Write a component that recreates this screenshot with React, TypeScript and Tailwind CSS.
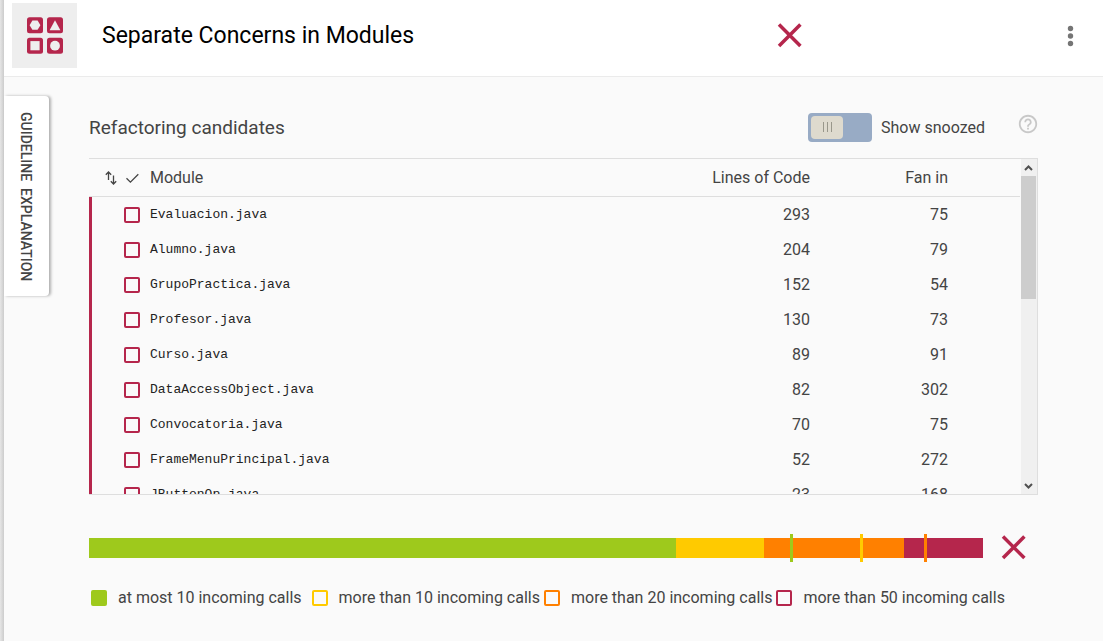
import { useState } from "react";
import { MdHelpOutline } from "react-icons/md";

type ModuleRow = { name: string; loc: number; fanIn: number };

const rows: ModuleRow[] = [
  { name: "Evaluacion.java", loc: 293, fanIn: 75 },
  { name: "Alumno.java", loc: 204, fanIn: 79 },
  { name: "GrupoPractica.java", loc: 152, fanIn: 54 },
  { name: "Profesor.java", loc: 130, fanIn: 73 },
  { name: "Curso.java", loc: 89, fanIn: 91 },
  { name: "DataAccessObject.java", loc: 82, fanIn: 302 },
  { name: "Convocatoria.java", loc: 70, fanIn: 75 },
  { name: "FrameMenuPrincipal.java", loc: 52, fanIn: 272 },
  { name: "JButtonOp.java", loc: 23, fanIn: 168 },
];

const segments = [
  { size: 587, color: "bg-[#9ec91c]" },
  { size: 88, color: "bg-[#ffca00]" },
  { size: 140, color: "bg-[#ff8000]" },
  { size: 79, color: "bg-[#b5264c]" },
];

const markers = [
  { at: 78.4, color: "bg-[#9ec91c]" },
  { at: 86.25, color: "bg-[#ffca00]" },
  { at: 93.4, color: "bg-[#ff8000]" },
];

const legend = [
  { label: "at most 10 incoming calls", box: "border-[#9ec91c] checked:bg-[#9ec91c]", item: "mr-[6px]" },
  { label: "more than 10 incoming calls", box: "border-[#ffca00] checked:bg-[#ffca00]", item: "" },
  { label: "more than 20 incoming calls", box: "border-[#ff8000] checked:bg-[#ff8000]", item: "" },
  { label: "more than 50 incoming calls", box: "border-[#b5264c] checked:bg-[#b5264c]", item: "" },
];

function Cross() {
  return (
    <svg viewBox="0 0 26 26" className="size-[26px] shrink-0" role="img" aria-label="Not met">
      <path d="M2 1.6 23.4 23M23.4 1.6 2 23" stroke="#b5264c" strokeWidth="3.5" fill="none" />
    </svg>
  );
}

function Logo() {
  return (
    <svg viewBox="0 0 37 37" className="size-[37px]" aria-hidden="true">
      <g fill="#b5264c">
        <rect x="1" y="0.3" width="16" height="16" rx="2.5" />
        <rect x="21" y="0.3" width="16" height="16" rx="2.5" />
        <rect x="1" y="20.7" width="16" height="16" rx="2.5" />
        <rect x="21" y="20.7" width="16" height="16" rx="2.5" />
      </g>
      <g fill="#eeeeee">
        <path d="M6.4 3.6h5.2L14.4 8.2l-2.8 4.6H6.4L3.6 8.2z" />
        <path d="M29 3.2 34.4 13.2H23.6z" />
        <rect x="4.4" y="24.1" width="9.2" height="9.2" />
        <circle cx="29" cy="28.7" r="4.9" />
      </g>
    </svg>
  );
}

function Chevron({ down = false }: { down?: boolean }) {
  return (
    <svg viewBox="0 0 15 17" className="h-[17px] w-[15px]" aria-hidden="true">
      <path d={down ? "M4 7l3.5 3.5L11 7" : "M4 11l3.5-3.5L11 11"} fill="none" stroke="#505050" strokeWidth="2" />
    </svg>
  );
}

function CandidatesTable() {
  return (
    <div className="flex h-[337px] border-y border-r border-[#dedede]">
      <div className="min-w-0 flex-1 overflow-hidden">
        <table className="w-full table-fixed border-separate border-spacing-0 text-base text-[#444]">
          <thead>
            <tr className="h-[38px]">
              <th className="w-[61px] border-b border-[#dedede] p-0 text-left font-normal">
                <span className="flex items-center gap-2 pl-4">
                  <svg viewBox="0 0 12 14" className="h-[14px] w-[12px]" role="img" aria-label="Sort">
                    <path d="M3.5 9V1.2M.8 3.7 3.5 1l2.7 2.7M8.5 4.5V13M5.8 10.3l2.7 2.7 2.7-2.7" fill="none" stroke="#444" strokeWidth="1.3" />
                  </svg>
                  <svg viewBox="0 0 14 14" className="size-[14px]" role="img" aria-label="Selected">
                    <path d="m1.5 7.2 3.9 3.9 7.9-7.9" fill="none" stroke="#444" strokeWidth="1.3" />
                  </svg>
                </span>
              </th>
              <th className="border-b border-[#dedede] p-0 text-left font-normal">Module</th>
              <th className="w-[160px] border-b border-[#dedede] p-0 text-right font-normal">Lines of Code</th>
              <th className="w-[210px] border-b border-[#dedede] p-0 pr-[72px] text-right font-normal">Fan in</th>
            </tr>
          </thead>
          <tbody>
            {rows.map((row) => (
              <tr key={row.name} className="h-[35px]">
                <td className="border-l-[3px] border-[#b5264c] p-0 pl-8">
                  <input
                    type="checkbox"
                    aria-label={"Select " + row.name}
                    className="block size-4 appearance-none rounded-xs border-2 border-[#b5264c] checked:bg-[#b5264c]"
                  />
                </td>
                <td className="p-0 font-['Liberation_Mono',monospace] text-[13px] text-[#222]">{row.name}</td>
                <td className="p-0 text-right">{row.loc}</td>
                <td className="p-0 pr-[72px] text-right">{row.fanIn}</td>
              </tr>
            ))}
          </tbody>
        </table>
      </div>
      <div className="ml-px flex w-[16px] flex-col bg-[#f0f0f0]" aria-hidden="true">
        <Chevron />
        <div className="h-[123px] w-[15px] bg-[#cdcdcd]" />
        <div className="flex-1" />
        <Chevron down />
      </div>
    </div>
  );
}

function ProfileBar() {
  return (
    <div className="flex items-center pr-[11px]">
      <div className="relative flex h-5 flex-1">
        {segments.map((s) => (
          <div key={s.color} className={s.color} style={{ flexGrow: s.size, flexBasis: 0 }} />
        ))}
        {markers.map((m) => (
          <div key={m.color} className={"absolute -top-1 h-7 w-[3px] " + m.color} style={{ left: m.at + "%" }} />
        ))}
      </div>
      <div className="ml-[18px] flex">
        <Cross />
      </div>
    </div>
  );
}

export default function App() {
  const [snoozed, setSnoozed] = useState(false);

  return (
    <div className="flex min-h-screen bg-[#fafafa] font-[Roboto,sans-serif] text-[#444]">
      <div className="w-1 shrink-0 bg-linear-to-r from-[#e6e6e6] to-[#cccccc]" />
      <div className="min-w-0 flex-1">
        <header className="flex h-[77px] items-start border-b border-[#ebebeb] bg-white pl-2">
          <div className="mt-[3px] flex size-[65px] items-center justify-center bg-[#eeeeee]">
            <Logo />
          </div>
          <div className="flex h-[71px] flex-1 items-center pl-[25px]">
            <h1 className="flex-1 text-[23px] leading-8 text-black">Separate Concerns in Modules</h1>
            <Cross />
            <button type="button" aria-label="More options" className="ml-[256px] mr-5 p-0">
              <svg viewBox="0 0 24 24" className="size-6" fill="#757575" aria-hidden="true">
                <circle cx="11.5" cy="4.5" r="2.7" />
                <circle cx="11.5" cy="12" r="2.7" />
                <circle cx="11.5" cy="19.5" r="2.7" />
              </svg>
            </button>
          </div>
        </header>

        <div className="flex items-start pt-[19px]">
          <button
            type="button"
            className="flex h-[200px] w-[45px] shrink-0 items-center justify-center rounded-r bg-white pr-[2px] pt-[2px] text-sm font-medium shadow-[2px_0_3px_rgba(0,0,0,0.3)]"
          >
            <span className="whitespace-pre [writing-mode:vertical-rl]">GUIDELINE  EXPLANATION</span>
          </button>

          <main className="ml-10 mr-[65px] min-w-0 flex-1">
            <div className="flex h-[62px] items-center">
              <h2 className="flex-1 pt-[2px] text-[19px] leading-6">Refactoring candidates</h2>
              <label className="flex cursor-pointer items-center gap-[9px] text-base">
                <input
                  type="checkbox"
                  role="switch"
                  className="peer sr-only"
                  checked={snoozed}
                  onChange={(e) => setSnoozed(e.target.checked)}
                />
                <span className="flex h-[29px] w-16 rounded bg-[#98abc5] p-[3px] peer-checked:justify-end">
                  <span className="flex h-[23px] w-8 items-center justify-center gap-[3px] rounded-sm bg-[#dedace]">
                    <span className="h-[10px] w-px bg-[#99978b]" />
                    <span className="h-[10px] w-px bg-[#99978b]" />
                    <span className="h-[10px] w-px bg-[#99978b]" />
                  </span>
                </span>
                <span className="pt-px">Show snoozed</span>
              </label>
              <button type="button" aria-label="Help" className="-mr-px mb-[6px] ml-8">
                <MdHelpOutline className="size-[22px] text-[#c8c8c8]" />
              </button>
            </div>

            <CandidatesTable />

            <div className="mt-10">
              <ProfileBar />
            </div>

            <div className="mt-[25px] flex gap-1 whitespace-nowrap pl-[2px] text-base">
              {legend.map((l, i) => (
                <label key={l.label} className={"flex items-center gap-[11px] " + l.item}>
                  <input
                    type="checkbox"
                    defaultChecked={i === 0}
                    className={"size-4 shrink-0 appearance-none rounded-xs border-2 " + l.box}
                  />
                  <span>{l.label}</span>
                </label>
              ))}
            </div>
          </main>
        </div>
      </div>
    </div>
  );
}
